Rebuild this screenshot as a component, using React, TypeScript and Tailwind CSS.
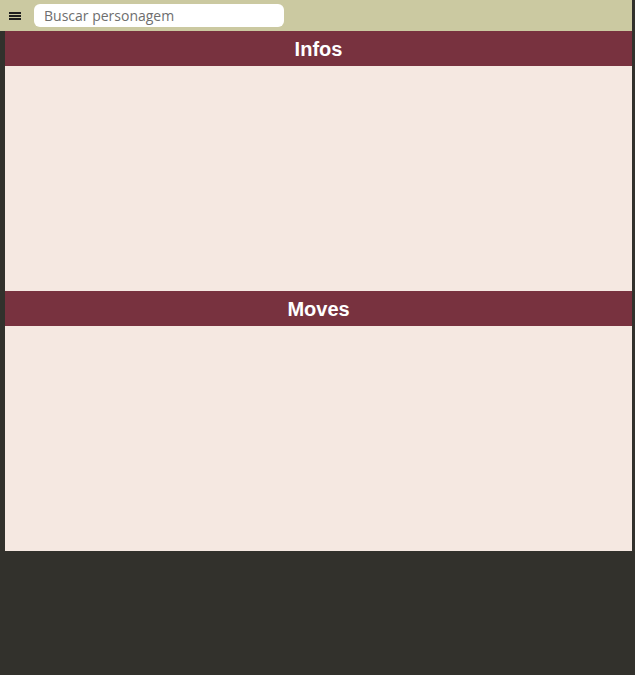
export default function App() {
  return (
    <div className="min-h-[675px] w-full bg-[#32312c] pr-[3px]">
      {/* Top bar */}
      <div className="flex h-[31px] items-center bg-[#cbc9a1]">
        <button className="ml-[9px] flex h-[8px] w-[12px] flex-col justify-between">
          <span className="block h-[2px] w-full bg-[#1f1f1f]" />
          <span className="block h-[2px] w-full bg-[#1f1f1f]" />
          <span className="block h-[2px] w-full bg-[#1f1f1f]" />
        </button>
        <input
          type="text"
          placeholder="Buscar personagem"
          className="ml-[13px] h-[23px] w-[250px] rounded-[6px] bg-white px-[10px] font-['Open_Sans',sans-serif] text-[14px] text-[#333] placeholder:text-[#6e6e6e] outline-none"
        />
      </div>

      {/* Panels */}
      <div className="ml-[5px] flex flex-col">
        <section>
          <h2 className="flex h-[35px] items-center justify-center bg-[#78323f] font-['Liberation_Sans',Arial,sans-serif] text-[20px] font-bold text-white">
            Infos
          </h2>
          <div className="h-[225px] bg-[#f5e8e1]" />
        </section>
        <section>
          <h2 className="flex h-[35px] items-center justify-center bg-[#78323f] font-['Liberation_Sans',Arial,sans-serif] text-[20px] font-bold text-white">
            Moves
          </h2>
          <div className="h-[225px] bg-[#f5e8e1]" />
        </section>
      </div>
    </div>
  )
}
